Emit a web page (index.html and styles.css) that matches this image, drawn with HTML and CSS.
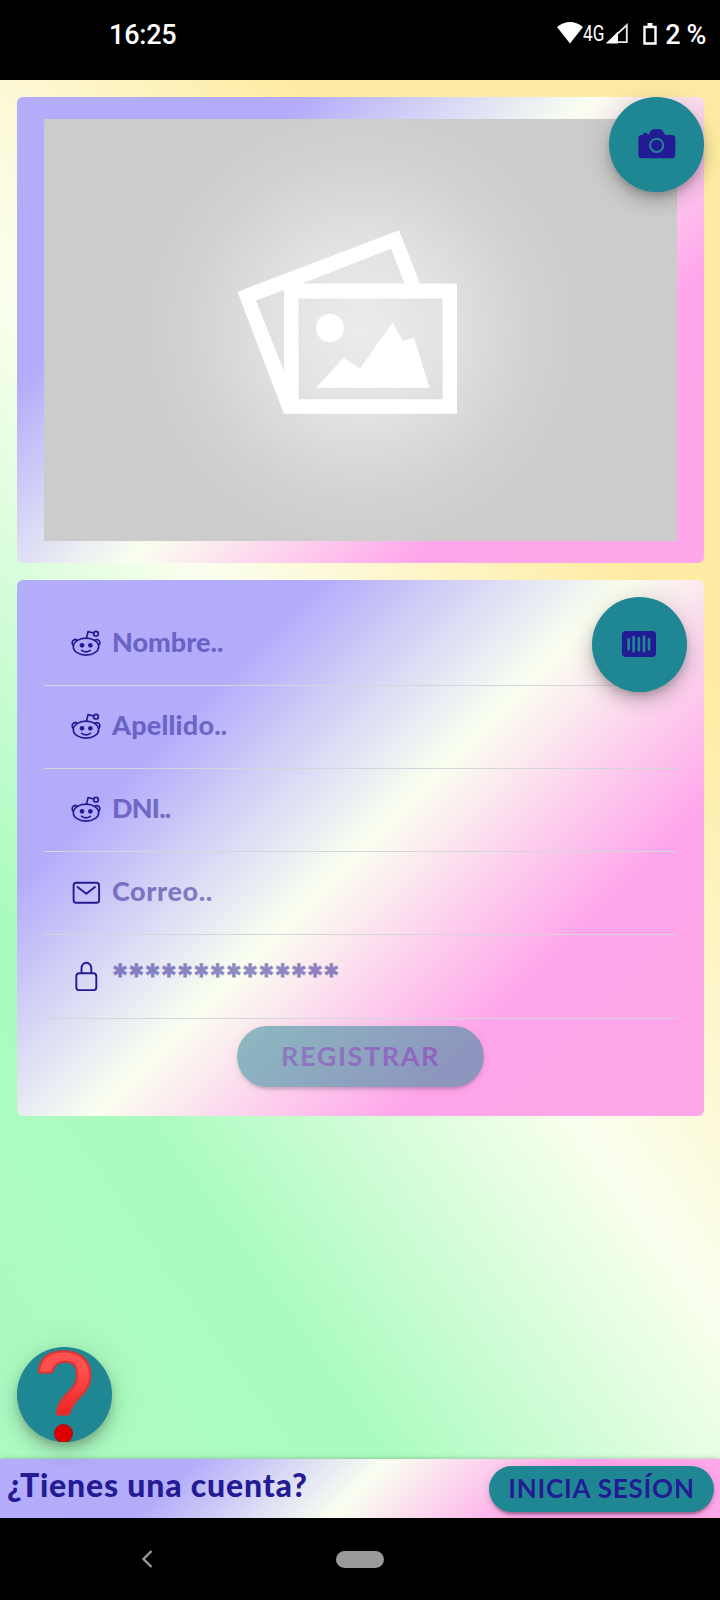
FILE: index.html
```html
<!DOCTYPE html>
<html lang="es">
<head>
<meta charset="utf-8">
<title>Registro</title>
<link rel="stylesheet" href="styles.css">
</head>
<body>
<svg class="defs" width="0" height="0" aria-hidden="true">
  <symbol id="reddit" viewBox="0 0 90 90">
    <g fill="none" stroke="currentColor" stroke-width="5" stroke-linecap="round" stroke-linejoin="round">
      <ellipse cx="45" cy="56" rx="38" ry="25.500"/>
      <path d="M7 52A8 8 0 1 1 19 37M83 52A8 8 0 1 0 71 37M47 29L51 11L68 15"/>
      <circle cx="75" cy="17" r="7"/>
      <path d="M32 67Q45 76 58 67"/>
    </g>
    <circle cx="33" cy="52" r="7" fill="currentColor"/>
    <circle cx="58" cy="52" r="7" fill="currentColor"/>
  </symbol>
</svg>
<header class="status">
  <span class="clock">16:25</span>
  <div class="indicators">
    <svg width="26" height="22" viewBox="0 0 26 22"><path d="M0 5Q13-5 26 5L13 21.500Z" fill="#fff"/></svg>
    <span class="net">4G</span>
    <svg class="signal" width="23" height="22" viewBox="0 0 23 22"><path d="M20.800 3V20.200H2.500Z" fill="none" stroke="#eee" stroke-width="1.800"/><path d="M0 21.500L12 9.500V21.500Z" fill="#fff"/></svg>
    <svg class="battery" width="14" height="22" viewBox="0 0 14 22"><path d="M1.500 4H12.500V20.500H1.500Z" fill="none" stroke="#fff" stroke-width="2.400"/><path d="M4.500 0H9.500V4H4.500Z" fill="#fff"/></svg>
    <span class="percent">2 %</span>
  </div>
</header>
<main class="page">
  <section class="card photo">
    <svg class="placeholder" viewBox="0 0 633 421" preserveAspectRatio="none">
      <defs>
        <radialGradient id="glow" gradientUnits="userSpaceOnUse" cx="317" cy="210" r="225">
          <stop offset="0" stop-color="#ececec"/><stop offset=".35" stop-color="#e3e3e3"/><stop offset=".75" stop-color="#d2d2d2"/><stop offset="1" stop-color="#cccccc"/>
        </radialGradient>
      </defs>
      <rect width="633" height="421" fill="url(#glow)"/>
      <g transform="translate(176 91)" fill="#fff">
        <path fill-rule="evenodd" d="M17.500 81.500L179 20L200 73H237V203H64Z M36 90L64 161V79.500Z M82 73H184.500L171 38.500Z M78.500 88V188.500H222.500V88Z"/>
        <circle cx="110" cy="117.500" r="14"/>
        <path d="M96 177L123.500 147.500L140 158L172.500 112L183 130.500L194 127L209.500 177Z"/>
      </g>
    </svg>
    <button class="fab fab-camera" aria-label="Cámara">
      <svg width="40" height="32" viewBox="830 386 120 96">
        <path fill="currentColor" d="M843 407H847Q848 400 855 400Q862 400 863 407Q867 405 869 399Q873 390 880 390H899Q906 390 909 397Q913 407 920 407H934Q945 407 945 418V466Q945 477 934 477H845Q834 477 834 466V418Q834 407 843 407Z"/>
        <circle cx="889" cy="438" r="20" fill="none" stroke="#1f8793" stroke-width="6"/>
      </svg>
    </button>
  </section>
  <section class="card form">
    <div class="row"><svg class="icon"><use href="#reddit"/></svg><span>Nombre..</span></div>
    <div class="row apellido"><svg class="icon"><use href="#reddit"/></svg><span>Apellido..</span></div>
    <div class="row dni"><svg class="icon"><use href="#reddit"/></svg><span>DNI..</span></div>
    <div class="row correo">
      <svg class="icon" viewBox="0 0 30 30"><g fill="none" stroke="currentColor" stroke-width="1.900" stroke-linecap="round" stroke-linejoin="round"><rect x="2.600" y="5.800" width="25.500" height="20" rx="2.600"/><path d="M6.500 10L15.300 16.800L24 10"/></g></svg>
      <span>Correo..</span>
    </div>
    <div class="row clave">
      <svg class="icon" viewBox="0 0 30 30"><g fill="none" stroke="currentColor" stroke-width="1.900" stroke-linecap="round"><rect x="5.300" y="12.200" width="20" height="17" rx="3"/><path d="M10.500 12V7.300A4.900 5.500 0 0 1 20.300 7.300V12"/></g></svg>
      <span>**************</span>
    </div>
    <button class="register" disabled>REGISTRAR</button>
    <button class="fab fab-scan" aria-label="Escanear">
      <svg width="34" height="26" viewBox="0 0 102 78">
        <rect width="102" height="78" rx="11" fill="currentColor"/>
        <path d="M20 25V55M35 18V61M50.500 21V58M66 17V61M81 25V55" stroke="#1f8793" stroke-width="8" stroke-linecap="round"/>
      </svg>
    </button>
  </section>
  <button class="fab fab-help" aria-label="Ayuda">
    <svg width="95" height="95" viewBox="0 0 285 285">
      <defs><linearGradient id="red" gradientUnits="userSpaceOnUse" x1="0" y1="10" x2="0" y2="205"><stop offset=".3" stop-color="#ff4f4f"/><stop offset="1" stop-color="#ee2222"/></linearGradient></defs>
      <path d="M71 77Q65 77 66 70C72 25 106 13 141 13C187 13 220 38 220 86C220 117 204 132 185 153C167 173 161 182 157 198Q155 203 150 203H124Q119 203 120 197C124 163 147 145 163 127C177 112 180 103 180 80C180 58 170 44 145 44C122 44 112 54 107 71Q106 77 99 77Z" fill="url(#red)" stroke="#d93636" stroke-width="7"/>
      <rect x="114" y="234" width="51" height="51" rx="25" fill="#e00000" stroke="#bb0b12" stroke-width="6"/>
    </svg>
  </button>
  <footer class="account">
    <span class="question">¿Tienes una cuenta?</span>
    <button class="login">INICIA SESÍON</button>
  </footer>
</main>
<nav class="nav">
  <svg class="back" width="12" height="20" viewBox="0 0 12 20"><path d="M10.500 2L2.500 10L10.500 18" fill="none" stroke="#999" stroke-width="2.400"/></svg>
  <span class="pill"></span>
</nav>
</body>
</html>
```
FILE: styles.css
```css
* { box-sizing: border-box; }
body {
  margin: 0;
  width: 720px;
  height: 1600px;
  display: flex;
  flex-direction: column;
  overflow: hidden;
  background: #000;
  color: #231b93;
  font-family: Lato, "Open Sans", sans-serif;
}
button { border: 0; padding: 0; margin: 0; font: inherit; color: inherit; }
svg { display: block; flex: none; }
.defs { position: absolute; }

.status {
  height: 80px;
  flex: none;
  display: flex;
  justify-content: space-between;
  padding: 22px 14px 0 109px;
  color: #fff;
  font: 500 27px/26px Roboto, sans-serif;
}
.clock { letter-spacing: -0.2px; }
.indicators { display: flex; align-items: flex-start; }
.net { font-size: 22px; font-weight: 400; line-height: 23px; width: 23px; transform: scaleX(.78); transform-origin: left; }
.battery { margin: 1px 8px 0 14px; }
.percent { letter-spacing: -.4px; }

.page {
  position: relative;
  height: 1438px;
  flex: none;
  display: flex;
  flex-direction: column;
  gap: 17px;
  padding: 17px 16px 0 17px;
  background: linear-gradient(235deg, #ffeca4, #ffeca4 25%, #fbffef 50%, #abfbc0 75%, #adfac3);
}
.card {
  position: relative;
  border-radius: 6px;
  padding: 22px 27px;
  background: linear-gradient(135deg, #b4adfb, #b3acfb 25%, #fafff0 50%, #ffa5eb 75%, #ffa7ea);
}
.photo { height: 466px; }
.placeholder { width: 633px; height: 422px; }
.form { height: 536px; display: flex; flex-direction: column; align-items: center; }
.row {
  width: 100%;
  height: 83px;
  flex: none;
  display: flex;
  align-items: center;
  gap: 11px;
  padding: 0 0 2px 27px;
  border-bottom: 1px solid #d3d7dc;
  font-size: 27px;
  font-weight: 900;
  line-height: 32px;
}
.row:first-child { height: 84px; }
.row span { opacity: .5; margin-top: -2px; }
.apellido { letter-spacing: .2px; }
.dni { letter-spacing: -.8px; }
.correo { letter-spacing: .6px; }
.clave { height: 84px; }
.row.clave span { font-size: 38px; margin-top: 4px; letter-spacing: .1px; -webkit-text-stroke: 1px currentColor; }
.icon { width: 30px; height: 30px; }

.fab {
  position: absolute;
  width: 95px;
  height: 95px;
  border-radius: 50%;
  display: grid;
  place-items: center;
  overflow: hidden;
  background: #1f8793;
  box-shadow: 0 5px 9px -2px rgba(0,0,0,.2), 0 10px 17px rgba(0,0,0,.14), 0 2px 31px rgba(0,0,0,.12);
}
.fab-camera { top: 0; right: 0; }
.fab-scan { top: 17px; right: 17px; }
.fab-scan svg { margin: 0 1px 1px 0; }
.fab-camera svg { margin-bottom: 1px; }
.fab-help { left: 17px; bottom: 76px; }

.register, .login {
  display: grid;
  place-items: center;
  border-radius: 31px;
  background: #1f8793;
  font-weight: 700;
  box-shadow: 0 5px 2px -3px rgba(0,0,0,.2), 0 3px 3px rgba(0,0,0,.14), 0 2px 8px rgba(0,0,0,.12);
}
.register {
  width: 247px;
  height: 61px;
  margin-top: 7px;
  padding-bottom: 3px;
  flex: none;
  opacity: .5;
  color: #231b93;
  font-size: 27px;
  letter-spacing: 1.6px;
}
.account {
  height: 59px;
  margin: auto -16px 0 -17px;
  padding: 0 6px 0 7px;
  display: flex;
  align-items: center;
  justify-content: space-between;
  background: linear-gradient(135deg, #b4adfb, #b3acfb 25%, #fafff0 50%, #ffa5eb 75%, #ffa7ea);
  box-shadow: 0 -1px 4px rgba(0,0,0,.2);
}
.question { font-size: 32px; font-weight: 900; margin-top: -8px; letter-spacing: .8px; }
.login { width: 225px; height: 46px; margin-top: 1px; padding-bottom: 2px; font-size: 26px; letter-spacing: .8px; }

.nav { height: 82px; flex: none; display: flex; align-items: center; padding-left: 141px; }
.pill { width: 48px; height: 17px; margin-left: 183px; border-radius: 9px; background: #999; }
```
